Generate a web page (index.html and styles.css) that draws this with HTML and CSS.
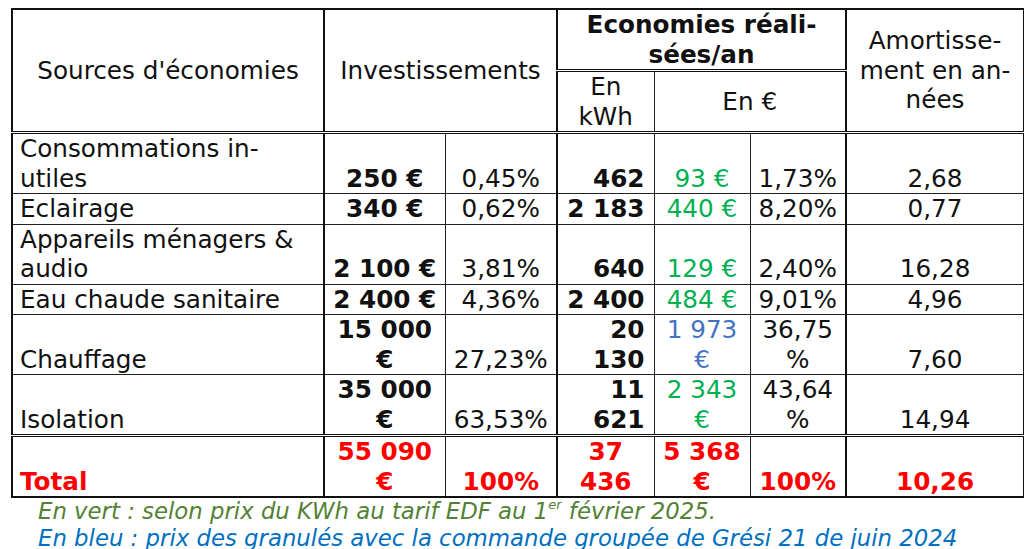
FILE: index.html
```html
<!DOCTYPE html>
<html lang="fr">
<head>
<meta charset="utf-8">
<title>Economies</title>
<link rel="stylesheet" href="styles.css">
</head>
<body>
<div class="page">
<table class="t">
<colgroup>
<col class="c1"><col class="c2"><col class="c3"><col class="c4"><col class="c5"><col class="c6"><col class="c7">
</colgroup>
<thead>
<tr>
<th rowspan="2" class="major-r">Sources d'économies</th>
<th rowspan="2" colspan="2" class="major-r">Investissements</th>
<th colspan="3" class="eco major-r">Economies réali-<br>sées/an</th>
<th rowspan="2">Amortisse-<br>ment en an-<br>nées</th>
</tr>
<tr>
<th class="sub">En<br>kWh</th>
<th colspan="2" class="sub major-r">En €</th>
</tr>
</thead>
<tbody>
<tr>
<td class="name major-r">Consommations in-<br>utiles</td>
<td class="inv">250 €</td><td class="pct major-r">0,45%</td>
<td class="kwh">462</td><td class="eur green">93 €</td><td class="pct major-r">1,73%</td><td class="am">2,68</td>
</tr>
<tr>
<td class="name major-r">Eclairage</td>
<td class="inv">340 €</td><td class="pct major-r">0,62%</td>
<td class="kwh">2 183</td><td class="eur green">440 €</td><td class="pct major-r">8,20%</td><td class="am">0,77</td>
</tr>
<tr>
<td class="name major-r">Appareils ménagers &amp;<br>audio</td>
<td class="inv">2 100 €</td><td class="pct major-r">3,81%</td>
<td class="kwh">640</td><td class="eur green">129 €</td><td class="pct major-r">2,40%</td><td class="am">16,28</td>
</tr>
<tr>
<td class="name major-r">Eau chaude sanitaire</td>
<td class="inv">2 400 €</td><td class="pct major-r">4,36%</td>
<td class="kwh">2 400</td><td class="eur green">484 €</td><td class="pct major-r">9,01%</td><td class="am">4,96</td>
</tr>
<tr>
<td class="name major-r">Chauffage</td>
<td class="inv">15 000<br>€</td><td class="pct major-r">27,23%</td>
<td class="kwh">20<br>130</td><td class="eur blue">1 973<br>€</td><td class="pct major-r">36,75<br>%</td><td class="am">7,60</td>
</tr>
<tr>
<td class="name major-r">Isolation</td>
<td class="inv">35 000<br>€</td><td class="pct major-r">63,53%</td>
<td class="kwh">11<br>621</td><td class="eur green">2 343<br>€</td><td class="pct major-r">43,64<br>%</td><td class="am">14,94</td>
</tr>
<tr class="total">
<td class="name major-r">Total</td>
<td class="inv">55 090<br>€</td><td class="pct major-r">100%</td>
<td class="kwh-c">37<br>436</td><td class="eur">5 368<br>€</td><td class="pct major-r">100%</td><td class="am">10,26</td>
</tr>
</tbody>
</table>
<div class="notes">
<p class="note-green">En vert : selon prix du KWh au tarif EDF au 1<sup>er</sup> février 2025.</p>
<p class="note-blue">En bleu : prix des granulés avec la commande groupée de Grési 21 de juin 2024</p>
</div>
</div>
</body>
</html>
```
FILE: styles.css
```css
html, body {
  margin: 0;
  padding: 0;
  background: #fff;
  overflow: hidden;
}
.page {
  padding: 8px 0 0 11px;
  font-family: "DejaVu Sans", sans-serif;
  color: #111;
}
.t {
  border-collapse: collapse;
  table-layout: fixed;
  width: 1012px;
  border: 2px solid #111;
  font-size: 24.7px;
  line-height: 29.5px;
}
.c1 { width: 312px; }
.c2 { width: 121px; }
.c3 { width: 112px; }
.c4 { width: 97px; }
.c5 { width: 96px; }
.c6 { width: 96px; }
.c7 { width: 178px; }
th, td {
  border: 1px solid #222;
  padding: 0 7px;
  white-space: nowrap;
}
th {
  font-weight: normal;
  text-align: center;
  vertical-align: middle;
}
th.eco {
  font-weight: bold;
  border-bottom: 3px double #111;
}
thead tr:last-child th,
thead th[rowspan] {
  border-bottom: 3px double #111;
}
td {
  vertical-align: bottom;
}
.major-r { border-right: 2px solid #111; }
.name { text-align: left; }
.inv { text-align: center; font-weight: bold; padding: 0 4px; }
.pct { text-align: center; padding: 0 4px; }
.kwh { text-align: right; font-weight: bold; padding: 0 9px 0 4px; }
.kwh-c { text-align: center; font-weight: bold; padding: 0 4px; }
.eur { text-align: center; padding: 0 4px; }
.am { text-align: center; }
.green { color: #00b050; }
.blue { color: #4472c4; }
tr.total td {
  color: #ff0000;
  font-weight: bold;
  border-top: 3px double #111;
}
.notes {
  padding-left: 27px;
  font-size: 22.8px;
  line-height: 27px;
  font-style: italic;
}
.notes p { margin: 0; white-space: nowrap; }
.note-green { color: #538135; }
.note-blue { color: #0070c0; }
sup {
  font-size: 13px;
  line-height: 0;
  vertical-align: 10px;
}
```
